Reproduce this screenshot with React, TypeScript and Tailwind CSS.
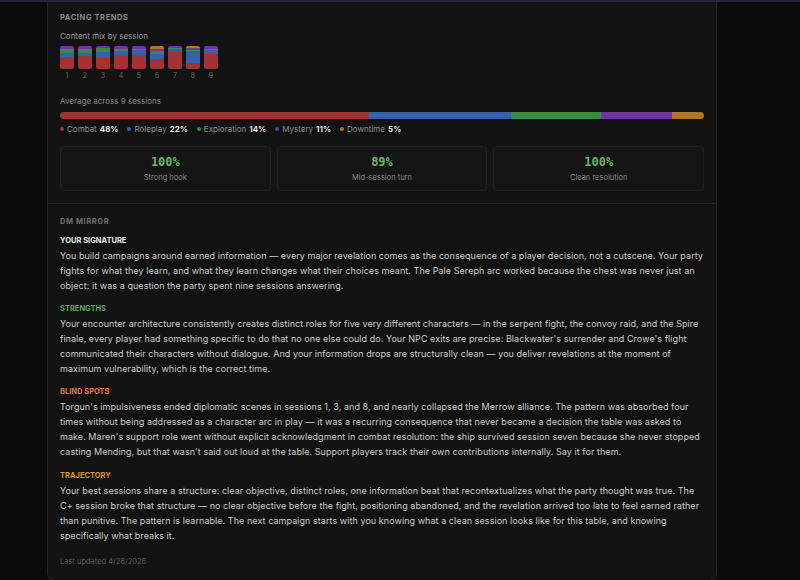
import React from 'react';

type Mix = { combat: number; roleplay: number; exploration: number; mystery: number; downtime: number };

const sessions: Mix[] = [
  { combat: 52, roleplay: 20, exploration: 15, mystery: 13, downtime: 0 },
  { combat: 56, roleplay: 16, exploration: 18, mystery: 10, downtime: 0 },
  { combat: 50, roleplay: 24, exploration: 18, mystery: 8, downtime: 0 },
  { combat: 62, roleplay: 18, exploration: 8, mystery: 12, downtime: 0 },
  { combat: 64, roleplay: 18, exploration: 4, mystery: 14, downtime: 0 },
  { combat: 46, roleplay: 20, exploration: 12, mystery: 10, downtime: 12 },
  { combat: 80, roleplay: 6, exploration: 8, mystery: 6, downtime: 0 },
  { combat: 28, roleplay: 50, exploration: 6, mystery: 8, downtime: 8 },
  { combat: 66, roleplay: 18, exploration: 4, mystery: 12, downtime: 0 }
];

const colors = {
  combat: '#a33232',
  roleplay: '#3560ab',
  exploration: '#3a8a3f',
  mystery: '#7034a6',
  downtime: '#b27722'
};

const order: (keyof Mix)[] = ['downtime', 'mystery', 'exploration', 'roleplay', 'combat'];

const legend = [
  { key: 'combat', label: 'Combat', value: 48 },
  { key: 'roleplay', label: 'Roleplay', value: 22 },
  { key: 'exploration', label: 'Exploration', value: 14 },
  { key: 'mystery', label: 'Mystery', value: 11 },
  { key: 'downtime', label: 'Downtime', value: 5 }
] as const;

const stats = [
  { value: '100%', label: 'Strong hook' },
  { value: '89%', label: 'Mid-session turn' },
  { value: '100%', label: 'Clean resolution' }
];

const mirror = [
  {
    title: 'Your signature',
    color: 'text-[#ececec]',
    body: 'You build campaigns around earned information — every major revelation comes as the consequence of a player decision, not a cutscene. Your party fights for what they learn, and what they learn changes what their choices meant. The Pale Sereph arc worked because the chest was never just an object: it was a question the party spent nine sessions answering.'
  },
  {
    title: 'Strengths',
    color: 'text-[#5aa55e]',
    body: "Your encounter architecture consistently creates distinct roles for five very different characters — in the serpent fight, the convoy raid, and the Spire finale, every player had something specific to do that no one else could do. Your NPC exits are precise: Blackwater's surrender and Crowe's flight communicated their characters without dialogue. And your information drops are structurally clean — you deliver revelations at the moment of maximum vulnerability, which is the correct time."
  },
  {
    title: 'Blind spots',
    color: 'text-[#e2793a]',
    body: "Torgun's impulsiveness ended diplomatic scenes in sessions 1, 3, and 8, and nearly collapsed the Merrow alliance. The pattern was absorbed four times without being addressed as a character arc in play — it was a recurring consequence that never became a decision the table was asked to make. Maren's support role went without explicit acknowledgment in combat resolution: the ship survived session seven because she never stopped casting Mending, but that wasn't said out loud at the table. Support players track their own contributions internally. Say it for them."
  },
  {
    title: 'Trajectory',
    color: 'text-[#d99a2b]',
    body: "Your best sessions share a structure: clear objective, distinct roles, one information beat that recontextualizes what the party thought was true. The C+ session broke that structure — no clear objective before the fight, positioning abandoned, and the revelation arrived too late to feel earned rather than punitive. The pattern is learnable. The next campaign starts with you knowing what a clean session looks like for this table, and knowing specifically what breaks it."
  }
];

const App = () => {
  return (
    <div className="h-[580px] w-[800px] overflow-hidden bg-[#0b0b0b] font-['Inter',sans-serif]">
      <div className="h-[2px] bg-[#26243a]" />
      <div className="ml-[47px] w-[670px] rounded-b-lg border-x border-b border-[#242424] bg-[#121212]">
        <section className="px-3 pt-[10px]">
          <h2 className="text-[7.5px] font-bold uppercase tracking-[0.08em] text-[#8a8a8a]">Pacing trends</h2>
          <p className="mt-[7px] text-[8px] text-[#9a9a9a]">Content mix by session</p>
          <div className="mt-[4px] flex gap-[4px]">
            {sessions.map((s, i) => (
              <div key={i} className="flex w-[14px] flex-col items-center">
                <div className="flex h-[23px] w-[14px] flex-col overflow-hidden rounded-[2px]">
                  {order.map((k) =>
                    s[k] > 0 ? <div key={k} style={{ height: `${s[k]}%`, background: colors[k] }} /> : null
                  )}
                </div>
                <span className="mt-[2px] text-[7px] leading-[10px] text-[#6a6a6a]">{i + 1}</span>
              </div>
            ))}
          </div>
          <p className="mt-[14px] text-[8px] text-[#8a8a8a]">Average across 9 sessions</p>
          <div className="mt-[5px] flex h-[7px] overflow-hidden rounded-full">
            {legend.map((l) => (
              <div key={l.key} style={{ width: `${l.value}%`, background: colors[l.key] }} />
            ))}
          </div>
          <div className="mt-[4px] flex gap-[9px] text-[8px] leading-[12px]">
            {legend.map((l) => (
              <span key={l.key} className="flex items-center gap-[3px]">
                <span className="h-[4px] w-[4px] rounded-full" style={{ background: colors[l.key] }} />
                <span className="text-[#8f8f8f]">{l.label}</span>
                <span className="font-bold text-[#e6e6e6]">{l.value}%</span>
              </span>
            ))}
          </div>
          <div className="mt-[11px] grid grid-cols-3 gap-[6px] pb-[12px]">
            {stats.map((s) => (
              <div
                key={s.label}
                className="flex h-[45px] flex-col items-center justify-center rounded-[4px] border border-[#1f1f1f] bg-[#141414]"
              >
                <span className="font-['DejaVu_Sans_Mono',monospace] text-[12px] font-bold leading-[15px] text-[#68b56c]">
                  {s.value}
                </span>
                <span className="mt-[2px] text-[7.5px] text-[#8a8a8a]">{s.label}</span>
              </div>
            ))}
          </div>
        </section>
        <section className="border-t border-[#222] px-3 pt-[12px] pb-[13px]">
          <h2 className="text-[7.5px] font-bold uppercase tracking-[0.08em] text-[#6f6f6f]">DM Mirror</h2>
          <div className="mt-[6px] flex flex-col gap-[9px]">
            {mirror.map((m) => (
              <div key={m.title}>
                <h3 className={`text-[7.5px] font-bold uppercase leading-[13px] ${m.color}`}>{m.title}</h3>
                <p className="mt-[1px] text-[9px] leading-[15.1px] tracking-[0.006em] text-[#cccccc]">{m.body}</p>
              </div>
            ))}
          </div>
          <p className="mt-[13px] text-[7.5px] text-[#5c5c5c]">Last updated 4/28/2026</p>
        </section>
      </div>
    </div>
  );
};

export default App;
